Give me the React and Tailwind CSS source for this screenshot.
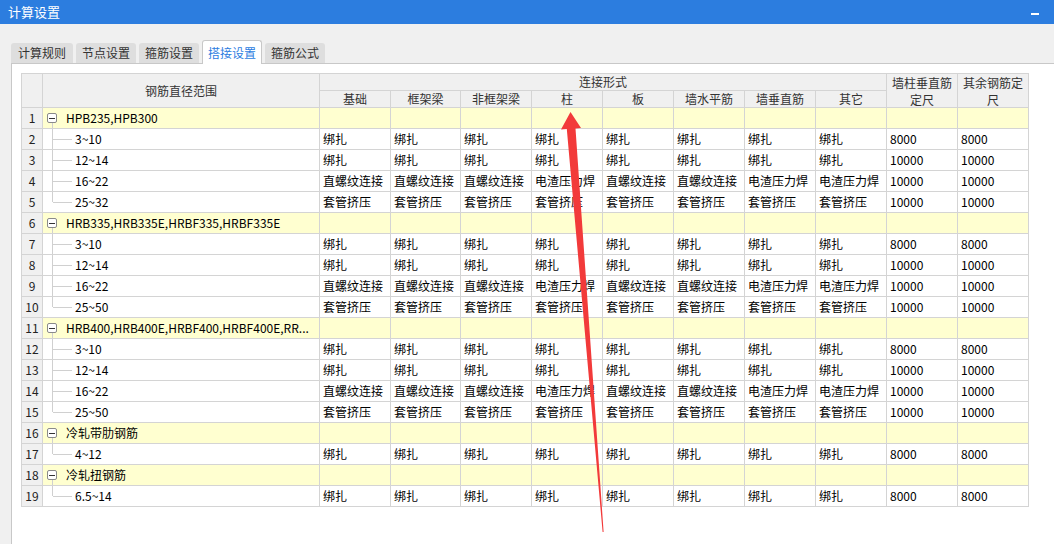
import React from 'react';

const FONT = { fontFamily: '"Noto Sans CJK SC", "Microsoft YaHei", sans-serif' };

const cols = 'grid grid-cols-[21px_277px_71px_70px_71px_71px_71px_71px_71px_71px_71px_71px]';
const line = 'border-r border-b border-[#d4d4d4]';

const tabs = ['计算规则', '节点设置', '箍筋设置', '搭接设置', '箍筋公式'];
const subHeads = ['基础', '框架梁', '非框架梁', '柱', '板', '墙水平筋', '墙垂直筋', '其它'];

const B = '绑扎';
const Z = '直螺纹连接';
const D = '电渣压力焊';
const T = '套管挤压';

const std = (a, b) => [
  { range: a[0], cells: [B, B, B, B, B, B, B, B, '8000', '8000'] },
  { range: a[1], cells: [B, B, B, B, B, B, B, B, '10000', '10000'] },
  { range: a[2], cells: [Z, Z, Z, D, Z, Z, D, D, '10000', '10000'] },
  { range: b, cells: [T, T, T, T, T, T, T, T, '10000', '10000'] },
];

const groups = [
  { name: 'HPB235,HPB300', items: std(['3~10', '12~14', '16~22'], '25~32') },
  { name: 'HRB335,HRB335E,HRBF335,HRBF335E', items: std(['3~10', '12~14', '16~22'], '25~50') },
  { name: 'HRB400,HRB400E,HRBF400,HRBF400E,RR...', items: std(['3~10', '12~14', '16~22'], '25~50') },
  { name: '冷轧带肋钢筋', items: [{ range: '4~12', cells: [B, B, B, B, B, B, B, B, '8000', '8000'] }] },
  { name: '冷轧扭钢筋', items: [{ range: '6.5~14', cells: [B, B, B, B, B, B, B, B, '8000', '8000'] }] },
];

function NumCell({ n }) {
  return (
    <div className={`${line} bg-[#f0f0f0] flex items-center justify-center text-[#222]`}>{n}</div>
  );
}

function GroupRow({ n, name }) {
  return (
    <div className={`${cols} h-[21px]`}>
      <NumCell n={n} />
      <div className={`${line} bg-[#ffffd0] relative flex items-center`}>
        <span className="absolute left-[4px] top-[5px] w-[10px] h-[10px] border border-[#8a8a8a] rounded-[2px] bg-white flex items-center justify-center">
          <span className="w-[6px] h-px bg-[#333]" />
        </span>
        <span className="absolute left-[9px] top-[15px] bottom-0 w-px bg-[#d0d0d0]" />
        <span className="pl-[23px] text-black">{name}</span>
      </div>
      {Array.from({ length: 10 }).map((_, i) => (
        <div key={i} className={`${line} bg-[#ffffd0]`} />
      ))}
    </div>
  );
}

function ItemRow({ n, item, last }) {
  return (
    <div className={`${cols} h-[21px]`}>
      <NumCell n={n} />
      <div className={`${line} bg-white relative flex items-center`}>
        <span className={`absolute left-[9px] top-0 w-px bg-[#d0d0d0] ${last ? 'h-[10px]' : 'bottom-0'}`} />
        <span className="absolute left-[10px] top-[10px] w-[19px] h-px bg-[#d0d0d0]" />
        <span className="pl-[32px] text-black">{item.range}</span>
      </div>
      {item.cells.map((c, i) => (
        <div key={i} className={`${line} bg-white flex items-center pl-[3px] text-black whitespace-nowrap overflow-hidden`}>
          {c}
        </div>
      ))}
    </div>
  );
}

export default function App() {
  let n = 0;
  const rows = [];
  groups.forEach((g, gi) => {
    n += 1;
    rows.push(<GroupRow key={`g${gi}`} n={n} name={g.name} />);
    g.items.forEach((it, ii) => {
      n += 1;
      rows.push(<ItemRow key={`r${gi}-${ii}`} n={n} item={it} last={ii === g.items.length - 1} />);
    });
  });

  return (
    <div className="relative w-[1054px] h-[544px] overflow-hidden bg-[#f0f0f0] text-[12px]" style={FONT}>
      {/* title bar */}
      <div className="h-[24px] bg-[#2c7ddf] flex items-center justify-between pl-[8px] pr-[15px]">
        <span className="text-white text-[13px]">计算设置</span>
        <span className="w-[8px] h-[2px] bg-white mt-[3px]" />
      </div>

      {/* tabs */}
      <div className="h-[39px] flex items-end pl-[11px] gap-[3px]">
        {tabs.map((t, i) =>
          i === 3 ? (
            <div
              key={t}
              className="h-[24px] w-[60px] bg-white border border-b-0 border-[#c8c8c8] rounded-t-[3px] text-[#2c7ddf] flex items-center justify-center relative top-px z-10"
            >
              {t}
            </div>
          ) : (
            <div
              key={t}
              className={`h-[20px] ${i === 0 ? 'w-[62px]' : 'w-[60px]'} bg-[#dedede] rounded-t-[3px] text-[#333] flex items-center justify-center`}
            >
              {t}
            </div>
          )
        )}
      </div>

      {/* panel */}
      <div className="ml-[11px] h-[481px] bg-white border-t border-l border-[#c8c8c8] pt-[9px] pl-[9px]">
        <div className="w-[1008px] border-l border-t border-[#d4d4d4]">
          {/* header */}
          <div className={`${cols} grid-rows-[17px_17px] bg-[#f0f0f0] text-[#333]`}>
            <div className={`${line} row-span-2`} />
            <div className={`${line} row-span-2 flex items-center justify-center`}>钢筋直径范围</div>
            <div className={`${line} col-span-8 flex items-center justify-center`}>连接形式</div>
            <div className={`${line} row-span-2 flex items-center justify-center text-center leading-[17px]`}>
              墙柱垂直筋定尺
            </div>
            <div className={`${line} row-span-2 flex items-center justify-center text-center leading-[17px]`}>
              其余钢筋定尺
            </div>
            {subHeads.map((h) => (
              <div key={h} className={`${line} flex items-center justify-center`}>{h}</div>
            ))}
          </div>
          {rows}
        </div>
      </div>

      {/* red arrow annotation */}
      <svg className="absolute top-0 left-0 pointer-events-none" width="1054" height="544" viewBox="0 0 1054 544">
        <polygon
          points="570.5,112 581,128 575.5,128.5 603.6,532 602.6,532 566.8,129 561,129.5"
          fill="#f23a3a"
        />
      </svg>
    </div>
  );
}
